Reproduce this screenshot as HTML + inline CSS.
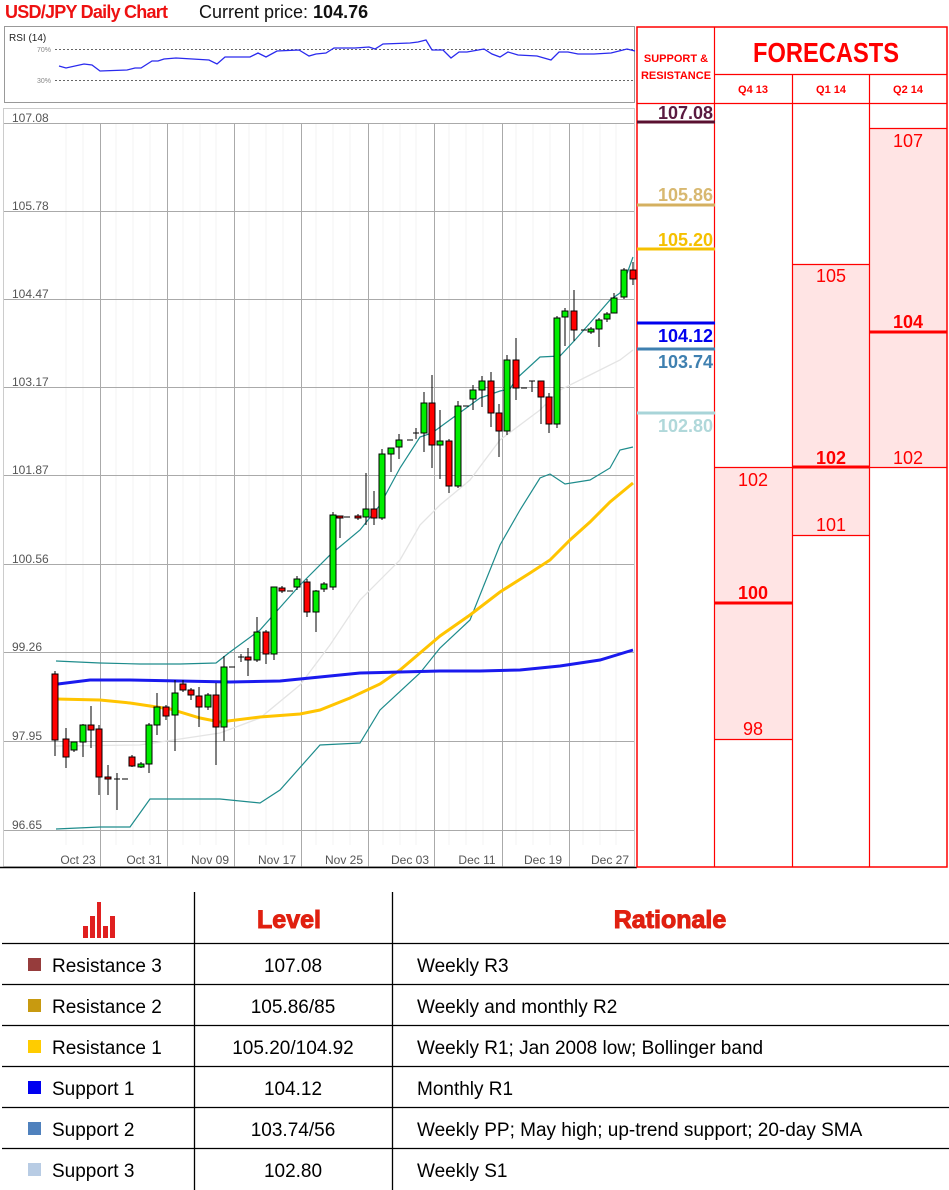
<!DOCTYPE html>
<html><head><meta charset="utf-8"><style>
html,body{margin:0;padding:0;background:#fff}
svg{display:block}
text{font-family:"Liberation Sans",sans-serif}
</style></head><body>
<svg width="949" height="1190" viewBox="0 0 949 1190" xmlns="http://www.w3.org/2000/svg">
<rect width="949" height="1190" fill="#fff"/>
<text x="5" y="18" font-size="18" font-weight="bold" fill="#ee1111" textLength="163">USD/JPY Daily Chart</text>
<text x="199" y="18" font-size="18" fill="#111">Current price: <tspan font-weight="bold">104.76</tspan></text>

<rect x="4.5" y="26.5" width="630" height="76" fill="#fff" stroke="#999"/>
<text x="9" y="41" font-size="10" fill="#222">RSI (14)</text>
<text x="37" y="52" font-size="7" fill="#888">70%</text>
<text x="37" y="83" font-size="7" fill="#888">30%</text>
<line x1="55" y1="49.5" x2="634" y2="49.5" stroke="#666" stroke-dasharray="2,2"/>
<line x1="55" y1="80.5" x2="634" y2="80.5" stroke="#666" stroke-dasharray="2,2"/>
<polyline fill="none" stroke="#2a2aee" stroke-width="1.3" points="59,66 66,68 84,64 92,65 100,71 127,70 135,68 141,68 152,61 158,61 164,59 176,58 209,60 217,64 225,57 240,57 250,57 258,53 266,57 277,51 299,50 309,56 316,54 326,53 334,48 355,48 369,47 375,49 383,44 410,43 418,42 426,40 432,50 443,50 451,58 459,52 467,52 484,49 492,54 500,57 508,52 518,55 537,56 551,60 559,52 568,52 578,54 594,54 611,53 627,49 635,51"/>

<rect x="3.5" y="108.5" width="631" height="758" fill="#fff" stroke="#ccc"/>
<g stroke="#f3f3f3" stroke-width="1">
<line x1="66" y1="124" x2="66" y2="845"/><line x1="83" y1="124" x2="83" y2="845"/>
<line x1="116" y1="124" x2="116" y2="845"/><line x1="133" y1="124" x2="133" y2="845"/><line x1="150" y1="124" x2="150" y2="845"/>
<line x1="183" y1="124" x2="183" y2="845"/><line x1="200" y1="124" x2="200" y2="845"/><line x1="216" y1="124" x2="216" y2="845"/>
<line x1="249" y1="124" x2="249" y2="845"/><line x1="266" y1="124" x2="266" y2="845"/><line x1="283" y1="124" x2="283" y2="845"/>
<line x1="316" y1="124" x2="316" y2="845"/><line x1="333" y1="124" x2="333" y2="845"/><line x1="350" y1="124" x2="350" y2="845"/>
<line x1="383" y1="124" x2="383" y2="845"/><line x1="400" y1="124" x2="400" y2="845"/><line x1="416" y1="124" x2="416" y2="845"/>
<line x1="449" y1="124" x2="449" y2="845"/><line x1="466" y1="124" x2="466" y2="845"/><line x1="483" y1="124" x2="483" y2="845"/>
<line x1="516" y1="124" x2="516" y2="845"/><line x1="533" y1="124" x2="533" y2="845"/><line x1="550" y1="124" x2="550" y2="845"/>
<line x1="583" y1="124" x2="583" y2="845"/><line x1="600" y1="124" x2="600" y2="845"/><line x1="616" y1="124" x2="616" y2="845"/>
</g>
<g stroke="#aaa" stroke-width="1">
<line x1="4" y1="123.5" x2="634" y2="123.5"/><line x1="4" y1="211.5" x2="634" y2="211.5"/>
<line x1="4" y1="299.5" x2="634" y2="299.5"/><line x1="4" y1="387.5" x2="634" y2="387.5"/>
<line x1="4" y1="475.5" x2="634" y2="475.5"/><line x1="4" y1="564.5" x2="634" y2="564.5"/>
<line x1="4" y1="652.5" x2="634" y2="652.5"/><line x1="4" y1="741.5" x2="634" y2="741.5"/>
<line x1="4" y1="830.5" x2="634" y2="830.5"/>
<line x1="100.5" y1="124" x2="100.5" y2="867"/><line x1="167.5" y1="124" x2="167.5" y2="867"/>
<line x1="234.5" y1="124" x2="234.5" y2="867"/><line x1="301.5" y1="124" x2="301.5" y2="867"/>
<line x1="368.5" y1="124" x2="368.5" y2="867"/><line x1="434.5" y1="124" x2="434.5" y2="867"/>
<line x1="502.5" y1="124" x2="502.5" y2="867"/><line x1="569.5" y1="124" x2="569.5" y2="867"/>
</g>
<g font-size="12" fill="#555">
<text x="12" y="122">107.08</text><text x="12" y="210">105.78</text><text x="12" y="298">104.47</text>
<text x="12" y="386">103.17</text><text x="12" y="474">101.87</text><text x="12" y="563">100.56</text>
<text x="12" y="651">99.26</text><text x="12" y="740">97.95</text><text x="12" y="829">96.65</text>
</g>
<g font-size="12" fill="#555" text-anchor="middle">
<text x="78" y="864">Oct 23</text><text x="144" y="864">Oct 31</text><text x="210" y="864">Nov 09</text>
<text x="277" y="864">Nov 17</text><text x="344" y="864">Nov 25</text><text x="410" y="864">Dec 03</text>
<text x="477" y="864">Dec 11</text><text x="543" y="864">Dec 19</text><text x="610" y="864">Dec 27</text>
</g>
<line x1="0" y1="867.5" x2="637" y2="867.5" stroke="#000" stroke-width="1.5"/>

<polyline fill="none" stroke="#e4e4e4" stroke-width="1.3" points="56,746 140,745 220,733 260,718 300,685 330,645 360,600 400,560 420,525 440,505 470,480 500,440 540,410 560,390 590,375 620,360 633,350"/>
<polyline fill="none" stroke="#1e8c8c" stroke-width="1.2" points="56,661 100,663 140,664 180,664 216,663 230,652 260,630 300,585 330,555 360,530 380,505 400,468 420,437 432,433 447,422 480,398 500,391 510,389 516,379 540,357 560,356 575,340 590,323 610,300 620,293 633,257"/>
<polyline fill="none" stroke="#1e8c8c" stroke-width="1.2" points="56,829 100,827 130,827 150,799 220,799 260,803 280,790 320,745 360,743 380,710 420,673 440,648 470,620 500,545 520,510 540,478 550,474 565,484 590,480 610,468 620,450 633,447"/>
<polyline fill="none" stroke="#ffc400" stroke-width="3" points="56,699 100,700 130,703 170,709 200,718 220,722 260,717 300,714 320,710 350,698 380,684 400,670 420,653 440,636 470,615 500,592 530,573 550,560 570,540 590,522 610,502 633,483"/>
<polyline fill="none" stroke="#1a1aee" stroke-width="3" points="58,684 90,680 130,680 230,682 280,681 320,677 360,673 400,672 440,671 480,671 520,670 560,666 600,660 633,650"/>

<g stroke="#000" stroke-width="1">
<line x1="55" y1="671" x2="55" y2="756"/><rect x="52" y="674" width="6" height="66" fill="#f00"/>
<line x1="66" y1="728" x2="66" y2="768"/><rect x="63" y="739" width="6" height="18" fill="#f00"/>
<line x1="74" y1="742" x2="74" y2="752"/><rect x="71" y="742" width="6" height="8" fill="#0e0"/>
<line x1="83" y1="724" x2="83" y2="757"/><rect x="80" y="725" width="6" height="17" fill="#0e0"/>
<line x1="91" y1="706" x2="91" y2="748"/><rect x="88" y="725" width="6" height="5" fill="#f00"/>
<line x1="99" y1="725" x2="99" y2="795"/><rect x="96" y="729" width="6" height="48" fill="#f00"/>
<line x1="108" y1="765" x2="108" y2="795"/><rect x="105" y="777" width="6" height="2" fill="#f00"/>
<line x1="117" y1="773" x2="117" y2="810"/><line x1="114" y1="779" x2="120" y2="779"/>
<line x1="122" y1="779" x2="128" y2="779"/>
<line x1="132" y1="755" x2="132" y2="767"/><rect x="129" y="757" width="6" height="9" fill="#f00"/>
<line x1="141" y1="762" x2="141" y2="768"/><rect x="138" y="764" width="6" height="3" fill="#0e0"/>
<line x1="149" y1="723" x2="149" y2="773"/><rect x="146" y="725" width="6" height="39" fill="#0e0"/>
<line x1="157" y1="693" x2="157" y2="735"/><rect x="154" y="707" width="6" height="18" fill="#0e0"/>
<line x1="166" y1="705" x2="166" y2="720"/><rect x="163" y="707" width="6" height="9" fill="#f00"/>
<line x1="175" y1="680" x2="175" y2="751"/><rect x="172" y="693" width="6" height="22" fill="#0e0"/>
<line x1="183" y1="680" x2="183" y2="692"/><rect x="180" y="684" width="6" height="6" fill="#f00"/>
<line x1="191" y1="688" x2="191" y2="700"/><rect x="188" y="690" width="6" height="5" fill="#f00"/>
<line x1="199" y1="687" x2="199" y2="727"/><rect x="196" y="696" width="6" height="11" fill="#f00"/>
<line x1="208" y1="693" x2="208" y2="710"/><rect x="205" y="695" width="6" height="12" fill="#0e0"/>
<line x1="216" y1="683" x2="216" y2="765"/><rect x="213" y="695" width="6" height="32" fill="#f00"/>
<line x1="224" y1="656" x2="224" y2="741"/><rect x="221" y="667" width="6" height="60" fill="#0e0"/>
<line x1="229" y1="667" x2="235" y2="667"/>
<line x1="238" y1="657" x2="244" y2="657"/><line x1="241" y1="654" x2="241" y2="662"/>
<line x1="248" y1="648" x2="248" y2="676"/><rect x="245" y="657" width="6" height="3" fill="#f00"/>
<line x1="257" y1="617" x2="257" y2="662"/><rect x="254" y="632" width="6" height="28" fill="#0e0"/>
<line x1="266" y1="630" x2="266" y2="664"/><rect x="263" y="632" width="6" height="22" fill="#f00"/>
<line x1="274" y1="587" x2="274" y2="660"/><rect x="271" y="587" width="6" height="67" fill="#0e0"/>
<line x1="282" y1="586" x2="282" y2="593"/><rect x="279" y="588" width="6" height="3" fill="#f00"/>
<line x1="287" y1="591" x2="293" y2="591"/>
<line x1="297" y1="576" x2="297" y2="590"/><rect x="294" y="579" width="6" height="8" fill="#0e0"/>
<line x1="307" y1="579" x2="307" y2="617"/><rect x="304" y="582" width="6" height="30" fill="#f00"/>
<line x1="316" y1="590" x2="316" y2="632"/><rect x="313" y="591" width="6" height="21" fill="#0e0"/>
<line x1="324" y1="582" x2="324" y2="592"/><rect x="321" y="584" width="6" height="5" fill="#0e0"/>
<line x1="333" y1="512" x2="333" y2="590"/><rect x="330" y="515" width="6" height="72" fill="#0e0"/>
<line x1="340" y1="516" x2="340" y2="538"/><rect x="337" y="516" width="6" height="2" fill="#f00"/>
<line x1="344" y1="517" x2="350" y2="517"/>
<line x1="358" y1="514" x2="358" y2="520"/><rect x="355" y="516" width="6" height="2" fill="#f00"/>
<line x1="366" y1="473" x2="366" y2="525"/><rect x="363" y="509" width="6" height="8" fill="#0e0"/>
<line x1="374" y1="491" x2="374" y2="525"/><rect x="371" y="509" width="6" height="9" fill="#f00"/>
<line x1="382" y1="449" x2="382" y2="520"/><rect x="379" y="454" width="6" height="64" fill="#0e0"/>
<line x1="391" y1="448" x2="391" y2="472"/><rect x="388" y="448" width="6" height="6" fill="#0e0"/>
<line x1="399" y1="434" x2="399" y2="459"/><rect x="396" y="440" width="6" height="7" fill="#0e0"/>
<line x1="407" y1="440" x2="413" y2="440"/>
<line x1="413" y1="433" x2="419" y2="433"/><line x1="416" y1="428" x2="416" y2="439"/>
<line x1="424" y1="392" x2="424" y2="452"/><rect x="421" y="403" width="6" height="30" fill="#0e0"/>
<line x1="432" y1="375" x2="432" y2="468"/><rect x="429" y="403" width="6" height="42" fill="#f00"/>
<line x1="440" y1="410" x2="440" y2="479"/><rect x="437" y="441" width="6" height="4" fill="#0e0"/>
<line x1="449" y1="439" x2="449" y2="493"/><rect x="446" y="441" width="6" height="45" fill="#f00"/>
<line x1="458" y1="401" x2="458" y2="488"/><rect x="455" y="406" width="6" height="80" fill="#0e0"/>
<line x1="463" y1="406" x2="469" y2="406"/>
<line x1="473" y1="385" x2="473" y2="410"/><rect x="470" y="390" width="6" height="9" fill="#0e0"/>
<line x1="482" y1="376" x2="482" y2="407"/><rect x="479" y="381" width="6" height="9" fill="#0e0"/>
<line x1="491" y1="372" x2="491" y2="427"/><rect x="488" y="381" width="6" height="32" fill="#f00"/>
<line x1="499" y1="404" x2="499" y2="457"/><rect x="496" y="413" width="6" height="18" fill="#f00"/>
<line x1="507" y1="355" x2="507" y2="435"/><rect x="504" y="360" width="6" height="71" fill="#0e0"/>
<line x1="516" y1="338" x2="516" y2="400"/><rect x="513" y="360" width="6" height="28" fill="#f00"/>
<line x1="521" y1="388" x2="527" y2="388"/>
<line x1="529" y1="381" x2="535" y2="381"/><line x1="532" y1="381" x2="532" y2="392"/>
<line x1="541" y1="381" x2="541" y2="424"/><rect x="538" y="381" width="6" height="16" fill="#f00"/>
<line x1="549" y1="393" x2="549" y2="433"/><rect x="546" y="397" width="6" height="27" fill="#f00"/>
<line x1="557" y1="316" x2="557" y2="428"/><rect x="554" y="318" width="6" height="106" fill="#0e0"/>
<line x1="565" y1="308" x2="565" y2="346"/><rect x="562" y="311" width="6" height="6" fill="#0e0"/>
<line x1="574" y1="290" x2="574" y2="341"/><rect x="571" y="311" width="6" height="19" fill="#f00"/>
<line x1="581" y1="330" x2="587" y2="330"/>
<line x1="591" y1="327" x2="591" y2="334"/><rect x="588" y="329" width="6" height="3" fill="#0e0"/>
<line x1="599" y1="318" x2="599" y2="347"/><rect x="596" y="320" width="6" height="9" fill="#0e0"/>
<line x1="607" y1="312" x2="607" y2="322"/><rect x="604" y="314" width="6" height="5" fill="#0e0"/>
<line x1="614" y1="293" x2="614" y2="313"/><rect x="611" y="298" width="6" height="15" fill="#0e0"/>
<line x1="624" y1="268" x2="624" y2="299"/><rect x="621" y="270" width="6" height="27" fill="#0e0"/>
<line x1="633" y1="262" x2="633" y2="285"/><rect x="630" y="270" width="6" height="9" fill="#f00"/>
</g>

<rect x="714.5" y="467" width="77.5" height="272" fill="#ffe4e4"/>
<rect x="792" y="264" width="77" height="271" fill="#ffe4e4"/>
<rect x="869" y="128" width="78" height="339" fill="#ffe4e4"/>
<rect x="637" y="27" width="310" height="840" fill="none" stroke="#ff0000" stroke-width="1.5"/>
<g stroke="#ff0000" stroke-width="1.2">
<line x1="714.5" y1="27" x2="714.5" y2="867"/>
<line x1="792.5" y1="74" x2="792.5" y2="867"/>
<line x1="869.5" y1="74" x2="869.5" y2="867"/>
<line x1="714" y1="74.5" x2="947" y2="74.5"/>
<line x1="637" y1="103.5" x2="947" y2="103.5"/>
<line x1="869" y1="128.5" x2="947" y2="128.5"/>
<line x1="714" y1="467.5" x2="792" y2="467.5"/>
<line x1="869" y1="467.5" x2="947" y2="467.5"/>
<line x1="792" y1="535.5" x2="869" y2="535.5"/>
<line x1="714" y1="739.5" x2="792" y2="739.5"/>
<line x1="792" y1="264.5" x2="869" y2="264.5"/>
</g>
<g stroke="#ff0000" stroke-width="3">
<line x1="714" y1="603" x2="792" y2="603"/>
<line x1="792" y1="467" x2="869" y2="467"/>
<line x1="869" y1="332" x2="947" y2="332"/>
</g>
<text x="676" y="62" font-size="11" font-weight="bold" fill="#ff0000" text-anchor="middle">SUPPORT &amp;</text>
<text x="676" y="79" font-size="11" font-weight="bold" fill="#ff0000" text-anchor="middle">RESISTANCE</text>
<text x="826" y="62" font-size="28" font-weight="bold" fill="#ff0000" text-anchor="middle" textLength="146" lengthAdjust="spacingAndGlyphs">FORECASTS</text>
<g font-size="11" font-weight="bold" fill="#ff0000" text-anchor="middle">
<text x="753" y="93">Q4 13</text><text x="831" y="93">Q1 14</text><text x="908" y="93">Q2 14</text>
</g>
<g font-size="18" font-weight="bold" text-anchor="end">
<text x="713" y="119" fill="#5a1a40">107.08</text>
<text x="713" y="201" fill="#d8b870">105.86</text>
<text x="713" y="246" fill="#f5c000">105.20</text>
<text x="713" y="342" fill="#0000ee">104.12</text>
<text x="713" y="368" fill="#3f80b0">103.74</text>
<text x="713" y="432" fill="#b0d8da">102.80</text>
</g>
<g stroke-width="3">
<line x1="637" y1="122" x2="715" y2="122" stroke="#5a1030"/>
<line x1="637" y1="205" x2="715" y2="205" stroke="#d4b060"/>
<line x1="637" y1="249" x2="715" y2="249" stroke="#f5c000"/>
<line x1="637" y1="323" x2="715" y2="323" stroke="#0000ee"/>
<line x1="637" y1="349" x2="715" y2="349" stroke="#3f80b0"/>
<line x1="637" y1="413" x2="715" y2="413" stroke="#a8d4d8"/>
</g>
<g font-size="18" fill="#ff0000" text-anchor="middle">
<text x="753" y="486">102</text><text x="753" y="599" font-weight="bold">100</text><text x="753" y="735">98</text>
<text x="831" y="282">105</text><text x="831" y="464" font-weight="bold">102</text><text x="831" y="531">101</text>
<text x="908" y="147">107</text><text x="908" y="328" font-weight="bold">104</text><text x="908" y="464">102</text>
</g>

<g fill="#e02020">
<rect x="83" y="926" width="5" height="12"/><rect x="90" y="916" width="5" height="22"/>
<rect x="97" y="902" width="4" height="36"/><rect x="103" y="926" width="5" height="12"/>
<rect x="110" y="916" width="5" height="22"/>
</g>
<text x="289" y="928" font-size="25" font-weight="900" fill="#e02010" text-anchor="middle" stroke="#e02010" stroke-width="1">Level</text>
<text x="670" y="928" font-size="25" font-weight="900" fill="#e02010" text-anchor="middle" stroke="#e02010" stroke-width="1">Rationale</text>
<g stroke="#000" stroke-width="1.3">
<line x1="194.5" y1="892" x2="194.5" y2="1190"/>
<line x1="392.5" y1="892" x2="392.5" y2="1190"/>
<line x1="2" y1="943.5" x2="949" y2="943.5"/>
<line x1="2" y1="984.5" x2="949" y2="984.5"/>
<line x1="2" y1="1025.5" x2="949" y2="1025.5"/>
<line x1="2" y1="1066.5" x2="949" y2="1066.5"/>
<line x1="2" y1="1107.5" x2="949" y2="1107.5"/>
<line x1="2" y1="1148.5" x2="949" y2="1148.5"/>
</g>
<rect x="28" y="958" width="13" height="13" fill="#963c3c"/>
<rect x="28" y="999" width="13" height="13" fill="#c89a10"/>
<rect x="28" y="1040" width="13" height="13" fill="#ffcc00"/>
<rect x="28" y="1081" width="13" height="13" fill="#0000f0"/>
<rect x="28" y="1122" width="13" height="13" fill="#4f81bd"/>
<rect x="28" y="1163" width="13" height="13" fill="#b8cce4"/>
<g font-size="19" fill="#000">
<text x="52" y="972">Resistance 3</text><text x="52" y="1013">Resistance 2</text>
<text x="52" y="1054">Resistance 1</text><text x="52" y="1095">Support 1</text>
<text x="52" y="1136">Support 2</text><text x="52" y="1177">Support 3</text>
<text x="417" y="972">Weekly R3</text><text x="417" y="1013">Weekly and monthly R2</text>
<text x="417" y="1054">Weekly R1; Jan 2008 low; Bollinger band</text><text x="417" y="1095">Monthly R1</text>
<text x="417" y="1136">Weekly PP; May high; up-trend support; 20-day SMA</text><text x="417" y="1177">Weekly S1</text>
</g>
<g font-size="19" fill="#000" text-anchor="middle">
<text x="293" y="972">107.08</text><text x="293" y="1013">105.86/85</text>
<text x="293" y="1054">105.20/104.92</text><text x="293" y="1095">104.12</text>
<text x="293" y="1136">103.74/56</text><text x="293" y="1177">102.80</text>
</g>
</svg>
</body></html>
